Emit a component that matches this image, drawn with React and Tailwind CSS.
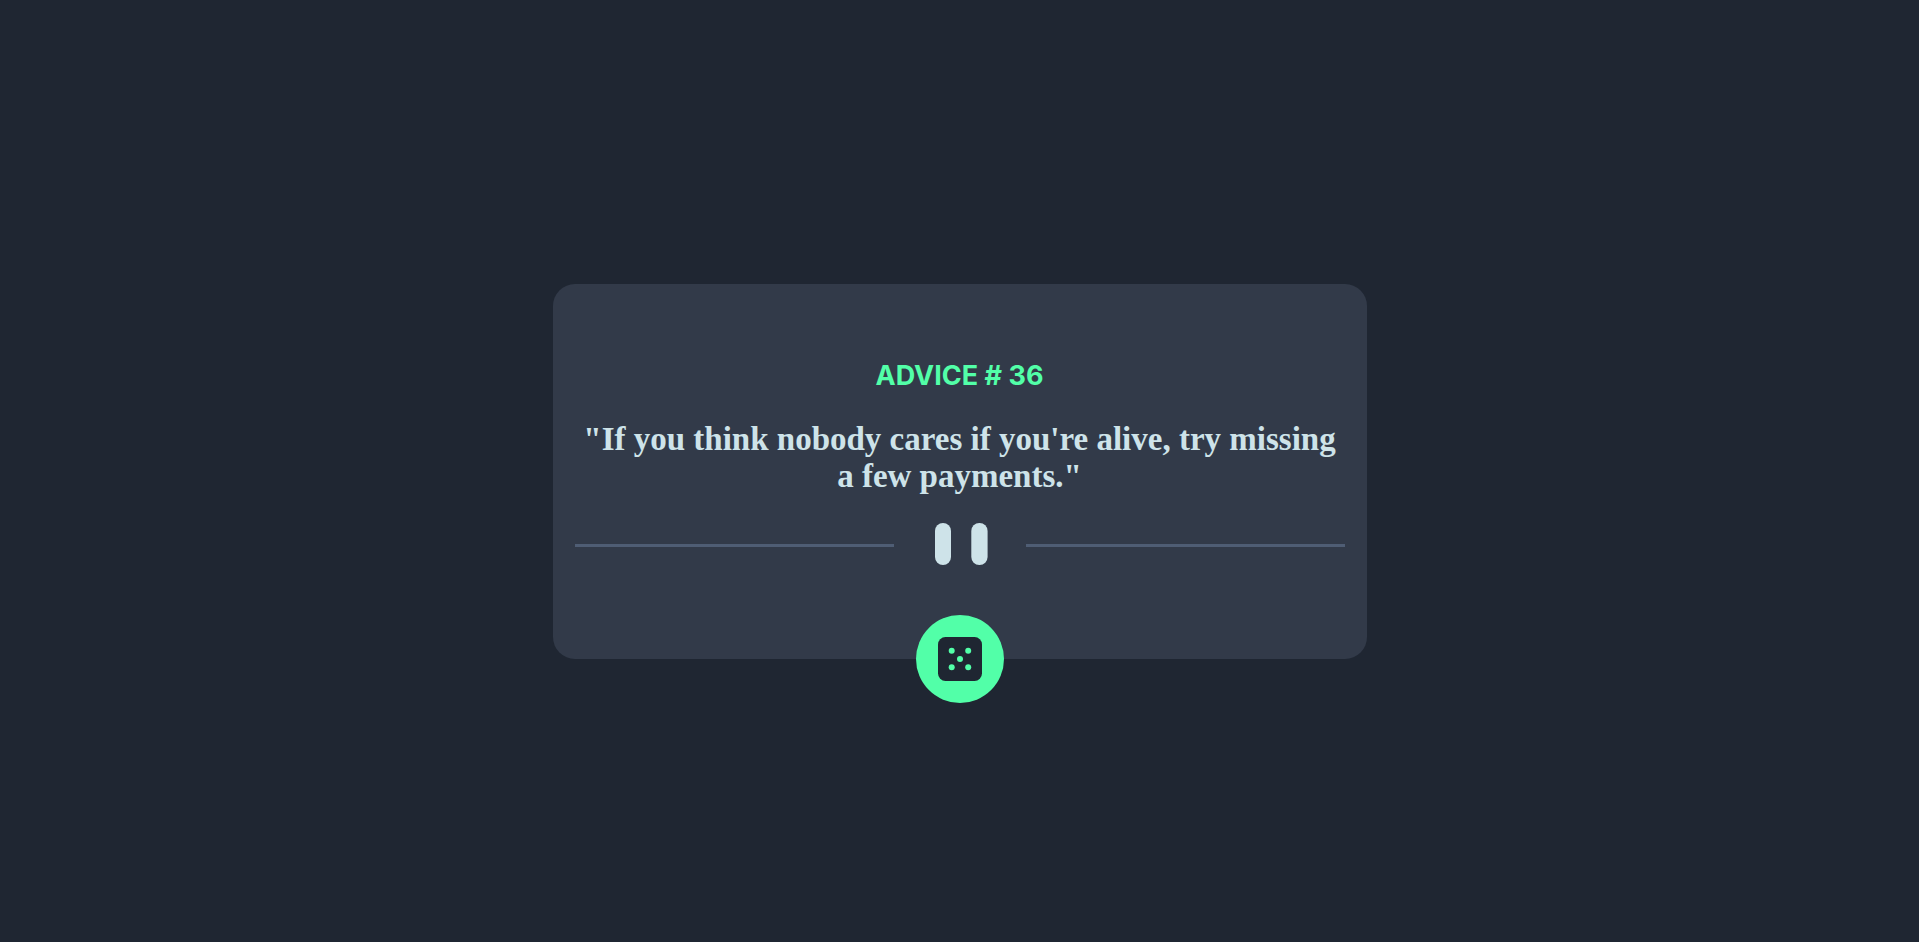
export default function App() {
  return (
    <main className="flex min-h-screen items-center justify-center bg-[#1f2632]">
      <section className="flex w-full max-w-[814px] flex-col items-center rounded-[22px] bg-[#323a49] px-[22px] pt-[74px] text-center">
        <h1 className="font-['Inter',sans-serif] text-[27px] leading-9 font-bold text-[#52ffa8]">ADVICE # 36</h1>
        <p className="mt-[27px] font-['Liberation_Serif',serif] text-[33px] leading-[37px] font-bold text-[#cee3e9]">
          "If you think nobody cares if you're alive, try missing a few payments."
        </p>
        <svg className="mt-7 w-full" viewBox="0 0 770 42" aria-hidden="true">
          <path fill="#4f5d74" d="M0 21h319v3H0zM451 21h319v3H451z" />
          <rect x="360" width="16" height="42" rx="8" fill="#cee3e9" />
          <rect x="396.3" width="16.3" height="42" rx="8" fill="#cee3e9" />
        </svg>
        <button type="button" aria-label="Get new advice" className="mt-[50px] -mb-11 flex size-[88px] items-center justify-center rounded-full bg-[#52ffa8]">
          <svg className="size-11" viewBox="0 0 44 44" aria-hidden="true">
            <rect width="44" height="44" rx="7.5" fill="#1f2632" />
            <g fill="#52ffa8">
              <circle cx="13.7" cy="13.7" r="3" />
              <circle cx="30.2" cy="13.7" r="3" />
              <circle cx="22" cy="22" r="3" />
              <circle cx="13.7" cy="30.2" r="3" />
              <circle cx="30.2" cy="30.2" r="3" />
            </g>
          </svg>
        </button>
      </section>
    </main>
  );
}
